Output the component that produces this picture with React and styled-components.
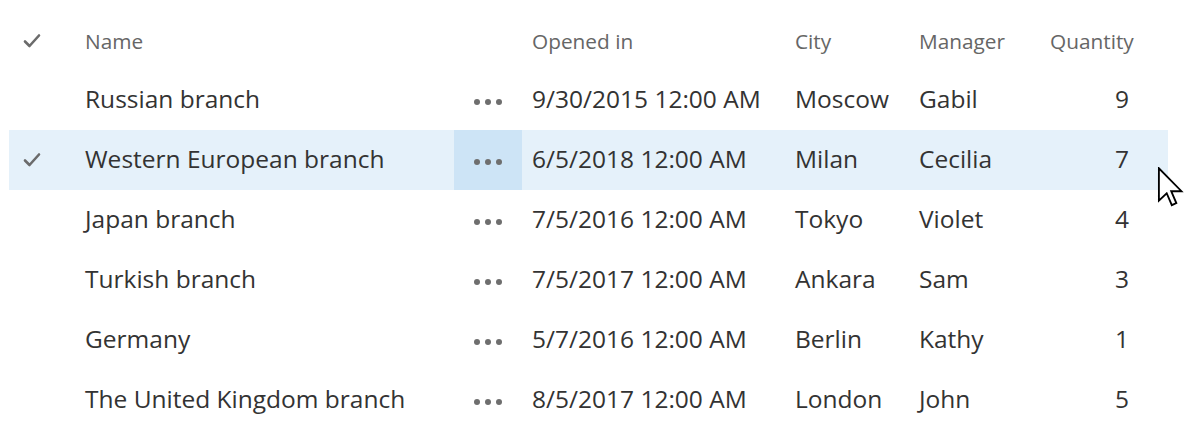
import React from "react";
import styled, { createGlobalStyle } from "styled-components";

const Global = createGlobalStyle`
  html, body { margin: 0; padding: 0; background: #fff; }
  body { font-family: "Open Sans", "Noto Sans", "Liberation Sans", sans-serif; overflow: hidden; }
`;

const Page = styled.div`
  position: relative;
  width: 1184px;
  height: 425px;
  overflow: hidden;
  padding: 0 16px 0 9px;
  box-sizing: border-box;
`;

const cols = "76px 369px 68px 273px 124px 131px 83px 35px";

const HeaderRow = styled.div`
  display: grid;
  grid-template-columns: ${cols};
  height: 58px;
  margin-top: 12px;
  align-items: center;
  color: #666;
  font-size: 20.8px;
`;

const HeaderCell = styled.div`
  padding-left: ${(p) => p.$pl || 0}px;
  text-align: ${(p) => (p.$right ? "right" : "left")};
  white-space: nowrap;
`;

const Row = styled.div`
  display: grid;
  grid-template-columns: ${cols};
  height: 60px;
  align-items: stretch;
  color: #333;
  font-size: 24.5px;
  background: ${(p) => (p.$selected ? "#e5f1fa" : "transparent")};
`;

const Cell = styled.div`
  display: flex;
  align-items: center;
  justify-content: ${(p) => (p.$right ? "flex-end" : "flex-start")};
  padding-left: ${(p) => p.$pl || 0}px;
  padding-right: ${(p) => p.$pr || 0}px;
  padding-bottom: 3px;
  white-space: nowrap;
`;

const CheckCell = styled.div`
  display: flex;
  align-items: center;
  padding-left: 13px;
`;

const DotsCell = styled.div`
  display: flex;
  align-items: center;
  justify-content: center;
  padding-top: 4px;
  background: ${(p) => (p.$hover ? "#cde4f6" : "transparent")};
`;

const Dots = styled.div`
  display: flex;
  gap: 5px;
  span {
    width: 6px;
    height: 6px;
    border-radius: 50%;
    background: #6e6e6e;
  }
`;

const Cursor = styled.svg`
  position: absolute;
  left: 1157px;
  top: 167px;
`;

const Check = ({ size = 20 }) => (
  <svg width={size} height={size} viewBox="0 0 20 20">
    <path d="M3 10.5 L7.5 15 L17 4.5" fill="none" stroke="#6b6b6b" strokeWidth="2.6" strokeLinecap="round" strokeLinejoin="round" />
  </svg>
);

const rows = [
  ["Russian branch", "9/30/2015 12:00 AM", "Moscow", "Gabil", "9"],
  ["Western European branch", "6/5/2018 12:00 AM", "Milan", "Cecilia", "7"],
  ["Japan branch", "7/5/2016 12:00 AM", "Tokyo", "Violet", "4"],
  ["Turkish branch", "7/5/2017 12:00 AM", "Ankara", "Sam", "3"],
  ["Germany", "5/7/2016 12:00 AM", "Berlin", "Kathy", "1"],
  ["The United Kingdom branch", "8/5/2017 12:00 AM", "London", "John", "5"],
];

export default function App() {
  return (
    <>
      <Global />
      <Page>
        <HeaderRow>
          <CheckCell><Check /></CheckCell>
          <HeaderCell>Name</HeaderCell>
          <HeaderCell />
          <HeaderCell $pl={10}>Opened in</HeaderCell>
          <HeaderCell>City</HeaderCell>
          <HeaderCell>Manager</HeaderCell>
          <HeaderCell>Quantity</HeaderCell>
          <HeaderCell />
        </HeaderRow>
        {rows.map((r, i) => {
          const sel = i === 1;
          return (
            <Row key={i} $selected={sel}>
              <CheckCell>{sel && <Check />}</CheckCell>
              <Cell>{r[0]}</Cell>
              <DotsCell $hover={sel}>
                <Dots><span /><span /><span /></Dots>
              </DotsCell>
              <Cell $pl={10}>{r[1]}</Cell>
              <Cell>{r[2]}</Cell>
              <Cell>{r[3]}</Cell>
              <Cell $right $pr={4}>{r[4]}</Cell>
              <Cell />
            </Row>
          );
        })}
        <Cursor width="28" height="40" viewBox="0 0 13 19.5">
          <path d="M0.6 0.6 L0.6 16.4 L4.4 12.8 L6.9 18.6 L9.1 17.6 L6.6 11.8 L11.6 11.8 Z" fill="#fff" stroke="#000" strokeWidth="0.9" strokeLinejoin="miter" />
        </Cursor>
      </Page>
    </>
  );
}
